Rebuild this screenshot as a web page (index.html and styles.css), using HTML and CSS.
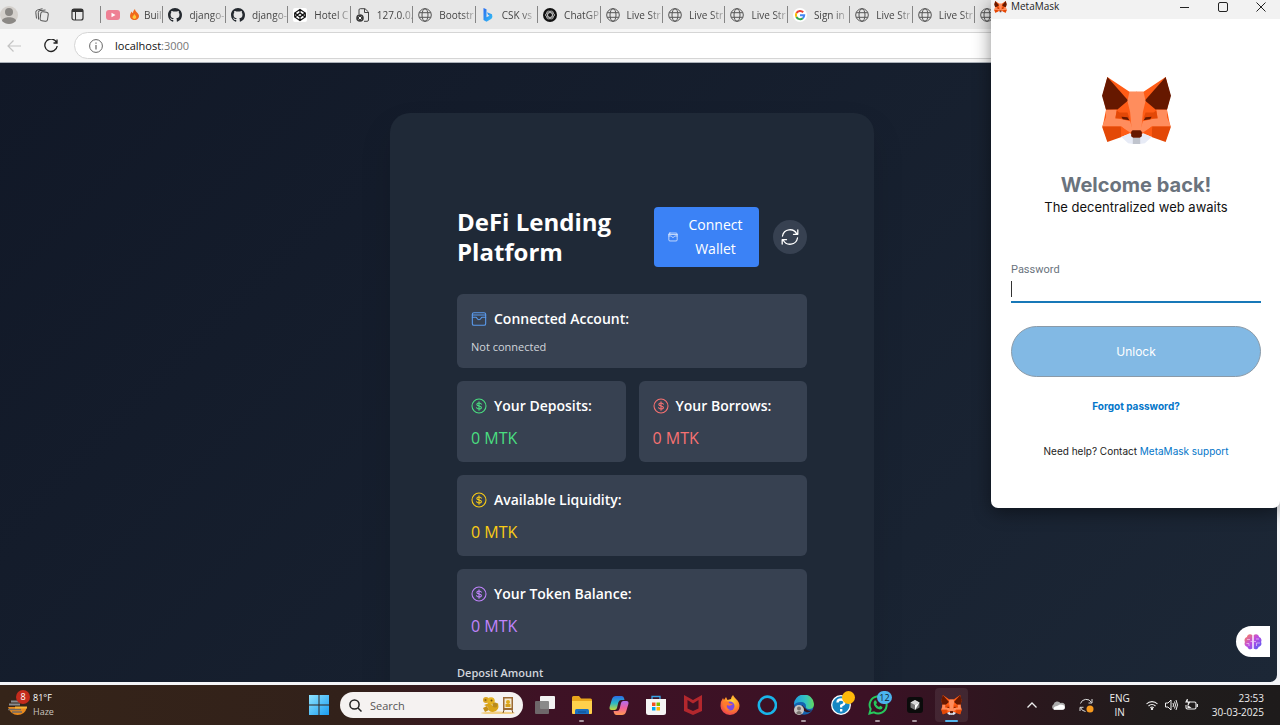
FILE: index.html
```html
<!DOCTYPE html>
<html lang="en">
<head>
<meta charset="utf-8">
<title>DeFi Lending Platform</title>
<link rel="stylesheet" href="styles.css">
</head>
<body>
<svg class="defs" aria-hidden="true">
  <defs>
    <linearGradient id="gWin" x1="0" y1="0" x2="1" y2="1"><stop offset="0" stop-color="#8fe3ff"/><stop offset="1" stop-color="#1a9df0"/></linearGradient>
    <linearGradient id="gBing" x1="0" y1="0" x2="1" y2="1"><stop offset="0" stop-color="#2a6cf0"/><stop offset="1" stop-color="#35c3f5"/></linearGradient>
    <linearGradient id="gBrain" x1="0" y1="0" x2="1" y2="1"><stop offset="0" stop-color="#ff8a4c"/><stop offset=".45" stop-color="#c04be0"/><stop offset="1" stop-color="#4a5cf5"/></linearGradient>
    <linearGradient id="gEdge" x1="0" y1="0" x2="1" y2="0"><stop offset="0" stop-color="#1f9be0"/><stop offset=".6" stop-color="#35c4c0"/><stop offset="1" stop-color="#62d85c"/></linearGradient>
    <radialGradient id="gFox" cx=".6" cy=".3" r=".8"><stop offset="0" stop-color="#ffd83a"/><stop offset=".5" stop-color="#ff8a25"/><stop offset="1" stop-color="#e8305a"/></radialGradient>
    <linearGradient id="gCopA" x1="0" y1="0" x2="0" y2="1"><stop offset="0" stop-color="#2b6de8"/><stop offset=".5" stop-color="#28b8c8"/><stop offset="1" stop-color="#c8d838"/></linearGradient>
    <linearGradient id="gCopB" x1="0" y1="0" x2="0" y2="1"><stop offset="0" stop-color="#b06cf0"/><stop offset=".5" stop-color="#f0609c"/><stop offset="1" stop-color="#ff9a50"/></linearGradient>
    <g id="foxHalf">
      <path fill="#ff5c16" d="M16 0 82 44H104V170H84L58 176 16 190 2 148 12 98 2 56Z"/>
      <path fill="#661800" d="M16 0 0 56 12 98 46 97 78 70Z"/>
      <path fill="#ff8d5d" d="M12 98H44L40 122 84 132 92 160 82 168 58 148H0L12 120Z"/>
      <path fill="#e34807" d="M44 100 52 106H76L82 124 40 124Z"/>
      <path fill="#661800" d="M58 119 76 120 82 129 62 126Z"/>
      <path fill="#e34807" d="M0 148H56L58 179 16 194Z"/>
      <path fill="#ff5c16" d="M56 148 84 166 58 179Z"/>
      <path fill="#e7ebf6" d="M58 179 84 167 94 182V200L78 198Z"/>
    </g>
    <symbol id="metafox" viewBox="0 0 206 200">
      <use href="#foxHalf"/>
      <use href="#foxHalf" transform="translate(206) scale(-1 1)"/>
      <path fill="#ff8d5d" d="M82 44H124L130 72 122 105 117 162H89L84 105 76 72Z"/>
      <path fill="#c0c4cd" d="M92 181H114V200H92Z"/>
      <path fill="#661800" d="M91 159H115L119 164V177L113 181H93L87 177V164Z"/>
    </symbol>
    <symbol id="globe" viewBox="0 0 14 14">
      <g fill="none" stroke="#555" stroke-width="1"><circle cx="7" cy="7" r="6.3"/><ellipse cx="7" cy="7" rx="3" ry="6.3"/><path d="M1.2 4.7H12.8M1.2 9.3H12.8"/></g>
    </symbol>
    <symbol id="github" viewBox="0 0 16 16">
      <path fill="#24292f" d="M8 0C3.58 0 0 3.58 0 8c0 3.54 2.29 6.53 5.47 7.59.4.07.55-.17.55-.38v-1.49c-2.01.37-2.53-.49-2.69-.94-.09-.23-.48-.94-.82-1.13-.28-.15-.68-.52-.01-.53.63-.01 1.08.58 1.23.82.72 1.21 1.87.87 2.33.66.07-.52.28-.87.51-1.07-1.78-.2-3.64-.89-3.64-3.95 0-.87.31-1.59.82-2.15-.08-.2-.36-1.02.08-2.12 0 0 .67-.21 2.2.82a7.6 7.6 0 0 1 4 0c1.53-1.04 2.2-.82 2.2-.82.44 1.1.16 1.92.08 2.12.51.56.82 1.27.82 2.15 0 3.07-1.87 3.75-3.65 3.95.29.25.54.73.54 1.48v2.2c0 .21.15.46.55.38A8 8 0 0 0 16 8c0-4.42-3.58-8-8-8z"/>
    </symbol>
    <symbol id="wallet" viewBox="0 0 24 24">
      <g fill="none" stroke="currentColor" stroke-width="1.6" stroke-linejoin="round" stroke-linecap="round"><rect x="2" y="2.5" width="20" height="19" rx="2.5"/><path d="M2 6H22M2 9.5H7.5C9 9.5 9 13 12 13S15 9.5 16.500 9.500H22"/></g>
    </symbol>
    <symbol id="coin" viewBox="0 0 24 24">
      <g fill="none" stroke="currentColor" stroke-width="1.6" stroke-linecap="round"><circle cx="12" cy="12" r="10.500"/><path d="M12 5.500V18.500M15.500 9.300C15 7.800 13.700 7.500 12 7.500 10 7.500 8.700 8.300 8.700 9.700 8.700 13 15.600 11 15.600 14.300 15.600 15.700 14 16.500 12 16.500 10 16.500 8.700 15.800 8.400 14.500"/></g>
    </symbol>
  </defs>
</svg>

<header class="tabstrip">
  <div class="tab-tools">
    <svg width="18" height="18" viewBox="0 0 18 18"><circle cx="9" cy="9" r="9" fill="#d4d0cc"/><circle cx="9" cy="6" r="4" fill="#8b8885"/><path d="M2 15C2 10 16 10 16 15 12 19 6 19 2 15Z" fill="#8b8885"/></svg>
    <svg width="14" height="14" viewBox="0 0 14 14" fill="none" stroke="#555" stroke-width="1"><rect x="5.500" y="4" width="7.500" height="9" rx="2" transform="rotate(8 9 8)"/><path d="M3.500 11.500 3.300 4.500Q3.300 2.800 5 2.600L10.500 2M1.500 10.500.8 4.500Q.6 2.500 2.500 2L7.500 .700"/></svg>
    <svg width="13" height="13" viewBox="0 0 13 13"><rect x="1" y="1" width="11" height="11" rx="2" fill="none" stroke="#333" stroke-width="1.200"/><path d="M1 1H12V4H1Z" fill="#333"/><path d="M4.500 4V12" stroke="#333"/></svg>
  </div>
  <nav class="tabs">
    <a class="tab" href="#"><svg width="14" height="10" viewBox="0 0 14 10"><rect width="14" height="10" rx="3" fill="#ee8094"/><path d="M5.500 2.800 9.500 5 5.500 7.200Z" fill="#fff"/></svg><svg class="flame" width="9" height="11" viewBox="0 0 9 11"><path d="M5 0C5 3 9 4 9 7.200A4.300 3.800 0 0 1 0 7.200C0 5 1 4 1.500 2.500 2 4 3 4 3 4 3 2 4 1 5 0Z" fill="#f06a1d"/><path d="M4.600 5C5 6.500 6.500 7 6.300 8.600A2 2 0 0 1 2.500 8.600C2.400 7 4 6.500 4.600 5Z" fill="#ffc83a"/></svg><span class="near">Buil</span></a>
    <a class="tab" href="#"><svg width="14" height="14"><use href="#github"/></svg><span>django-</span></a>
    <a class="tab" href="#"><svg width="14" height="14"><use href="#github"/></svg><span>django-</span></a>
    <a class="tab" href="#"><svg width="14" height="14" viewBox="0 0 14 14"><rect width="14" height="14" rx="2" fill="#fff"/><path d="M7 1.500 12.300 5V9L7 12.500 1.700 9V5ZM7 1.500V5L12 9M7 5 2 9M7 12.500V9L2 5M7 9 12 5M4 7 7 5 10 7 7 9Z" fill="none" stroke="#111" stroke-width="1.200"/></svg><span>Hotel C</span></a>
    <a class="tab" href="#"><svg width="14" height="14" viewBox="0 0 14 14"><path d="M3 6V2Q3 .700 4.300.700H9L12.500 4V12Q12.500 13.300 11 13.300H8M8.500 1V4.500H12.500" fill="none" stroke="#444"/><circle cx="4" cy="10" r="3.800" fill="#3a3a3a"/><path d="M2.600 8.600 5.400 11.400M5.400 8.600 2.600 11.400" stroke="#fff"/></svg><span>127.0.0.</span></a>
    <a class="tab" href="#"><svg width="14" height="14"><use href="#globe"/></svg><span>Bootstr</span></a>
    <a class="tab" href="#"><svg width="14" height="14" viewBox="0 0 14 14"><path d="M2.500 0 5.500 1.200V9.200L8.500 7.700 7 6.800 6 4.300 11 6.300Q12 9 10.500 10.800L5.500 13.700 2.500 12Z" fill="url(#gBing)"/></svg><span>CSK vs</span></a>
    <a class="tab" href="#"><svg width="14" height="14" viewBox="0 0 14 14"><circle cx="7" cy="7" r="7" fill="#111"/><g fill="none" stroke="#ddd" stroke-width=".7"><ellipse cx="7" cy="7" rx="4.500" ry="2.300"/><ellipse cx="7" cy="7" rx="4.500" ry="2.300" transform="rotate(60 7 7)"/><ellipse cx="7" cy="7" rx="4.500" ry="2.300" transform="rotate(120 7 7)"/></g></svg><span>ChatGP</span></a>
    <a class="tab" href="#"><svg width="14" height="14"><use href="#globe"/></svg><span>Live Str</span></a>
    <a class="tab" href="#"><svg width="14" height="14"><use href="#globe"/></svg><span>Live Str</span></a>
    <a class="tab" href="#"><svg width="14" height="14"><use href="#globe"/></svg><span>Live Str</span></a>
    <a class="tab" href="#"><svg width="14" height="14" viewBox="0 0 14 14"><circle cx="7" cy="7" r="7" fill="#fff"/><g fill="none" stroke-width="2"><path d="M3.500 5A4.200 4.200 0 0 1 10.200 4.200" stroke="#ea4335"/><path d="M3.400 9A4.200 4.200 0 0 1 3.400 5" stroke="#fbbc05"/><path d="M9.800 10.200A4.200 4.200 0 0 1 3.400 9" stroke="#34a853"/><path d="M7 7.200H11.200A4.200 4.200 0 0 1 9.800 10.200" stroke="#4285f4"/></g></svg><span>Sign in</span></a>
    <a class="tab" href="#"><svg width="14" height="14"><use href="#globe"/></svg><span>Live Str</span></a>
    <a class="tab" href="#"><svg width="14" height="14"><use href="#globe"/></svg><span>Live Str</span></a>
    <a class="tab" href="#" aria-label="Open tab"><svg width="14" height="14"><use href="#globe"/></svg></a>
  </nav>
</header>

<div class="toolbar">
  <button class="nav-btn" aria-label="Back"><svg width="14" height="12" viewBox="0 0 14 12" fill="none" stroke="#c3c3c3" stroke-width="1.200"><path d="M14 6H1M6.500.5 1 6 6.500 11.500"/></svg></button>
  <button class="nav-btn" aria-label="Reload"><svg width="14" height="14" viewBox="0 0 14 14" fill="none" stroke="#222" stroke-width="1.300"><path d="M12.600 3.500A6.200 6.200 0 1 0 13.200 7M13 .500V4H9.500"/></svg></button>
  <div class="address">
    <svg width="14" height="14" viewBox="0 0 14 14"><circle cx="7" cy="7" r="6.400" fill="none" stroke="#666"/><path d="M7 6V10.500M7 3.500V4.800" stroke="#666" stroke-width="1.200"/></svg>
    <span class="url">localhost<span class="port">:3000</span></span>
  </div>
</div>

<div class="viewport">
  <main class="page">
    <section class="card">
      <div class="card-head">
        <h1>DeFi Lending Platform</h1>
        <button class="connect"><svg width="10" height="10"><use href="#wallet"/></svg><span>Connect Wallet</span></button>
        <button class="refresh" aria-label="Refresh"><svg width="20" height="20" viewBox="0 0 20 20" fill="none" stroke="#fff" stroke-width="1.300" stroke-linecap="round" stroke-linejoin="round"><path d="M2.500 9A7.600 7.600 0 0 1 16.800 7M17.500 11A7.600 7.600 0 0 1 3.200 13M17.800 3V7.300H13.500M2.200 17V12.700H6.500"/></svg></button>
      </div>
      <div class="grid">
        <article class="box wide"><h2><svg class="blue" width="16" height="16"><use href="#wallet"/></svg>Connected Account:</h2><p class="note">Not connected</p></article>
        <article class="box green"><h2><svg width="16" height="16"><use href="#coin"/></svg>Your Deposits:</h2><p class="amount">0 MTK</p></article>
        <article class="box red"><h2><svg width="16" height="16"><use href="#coin"/></svg>Your Borrows:</h2><p class="amount">0 MTK</p></article>
        <article class="box wide yellow"><h2><svg width="16" height="16"><use href="#coin"/></svg>Available Liquidity:</h2><p class="amount">0 MTK</p></article>
        <article class="box wide purple"><h2><svg width="16" height="16"><use href="#coin"/></svg>Your Token Balance:</h2><p class="amount">0 MTK</p></article>
      </div>
      <label class="field-label" for="deposit">Deposit Amount</label>
      <input id="deposit" class="field" type="text">
    </section>
  </main>
  <button class="assistant" aria-label="Assistant"><svg width="18" height="16" viewBox="0 0 18 16"><path fill="url(#gBrain)" d="M8.300 1C5-.800 3 1.500 3 3 .500 4 0 6 1 8-.300 10.500 1.500 12.500 3.300 12.800 4 15.500 7 16 8.300 14.500ZM9.700 1C13-.800 15 1.500 15 3 17.500 4 18 6 17 8 18.300 10.500 16.500 12.500 14.700 12.800 14 15.500 11 16 9.700 14.500Z"/><path d="M3 5.500H6M2.500 9.500H5V12M12 5H15M12.500 12V9H16M6.500 7.500H8M10 7.500H12" stroke="#fff" stroke-width=".5" fill="none"/></svg></button>
</div>

<footer class="taskbar">
  <button class="weather">
    <svg width="22" height="25" viewBox="0 0 22 25"><path d="M1 14H20Q18 22 10.500 22 4 22 1 14Z" fill="#e98a1d"/><path d="M4 8.500H14M2 11.500H13" stroke="#8a8c90" stroke-width="1.800"/><path d="M1 16.500H14M5 19H15" stroke="#6f6a66" stroke-width="1.400"/><path d="M8 14.500H20" stroke="#f7b338" stroke-width="2"/></svg>
    <span class="alert">8</span>
    <span class="weather-text"><span class="temp">81°F</span><span>Haze</span></span>
  </button>
  <div class="apps">
    <button class="app" aria-label="Start"><svg width="20" height="20" viewBox="0 0 20 20"><path fill="url(#gWin)" d="M0 0H9.500V9.500H0ZM10.500 0H20V9.500H10.500ZM0 10.500H9.500V20H0ZM10.500 10.500H20V20H10.500Z"/></svg></button>
    <label class="search">
      <svg width="13" height="13" viewBox="0 0 13 13" fill="none" stroke="#222" stroke-width="1.500"><circle cx="5.500" cy="5.500" r="4.600"/><path d="M9 9 12.500 12.500"/></svg>
      <input type="text" placeholder="Search" aria-label="Search">
      <svg width="36" height="18" viewBox="0 0 36 18"><ellipse cx="17" cy="17" rx="17" ry="1.500" fill="#f2cf84"/><circle cx="5" cy="4" r="3" fill="#dba524"/><circle cx="10" cy="5" r="3.800" fill="#e6b422"/><circle cx="4.500" cy="4" r="1" fill="#8a6414"/><circle cx="10.500" cy="4.500" r="1" fill="#6f5210"/><path d="M3 9 8 7 12 10 17 7Q19 15 12 16 7 16 7 11Z" fill="#d9a418"/><path d="M2 12 6 10 8 14 4 16Z" fill="#c48f18"/><circle cx="14" cy="9" r="2.500" fill="#b98b1c"/><path d="M22 1H32V14H22Z" fill="#9b6a34"/><path d="M23.500 2.500H30.500V12H23.500Z" fill="#f4ead2"/><circle cx="27" cy="6" r="2" fill="#e0aa1a"/><path d="M24.500 8H29.500V11H24.500Z" fill="#d5a01c"/><path d="M23 14 22 17M31 14 32 17" stroke="#7a5227"/></svg>
    </label>
    <button class="app" aria-label="Task view"><svg width="20" height="18" viewBox="0 0 20 18"><rect x="5" width="15" height="13" rx="1" fill="#f2f2f2"/><rect y="5" width="14" height="13" rx="1" fill="#777" opacity=".85"/></svg></button>
    <button class="app open" aria-label="Files"><svg width="20" height="18" viewBox="0 0 20 18"><path d="M0 1.500Q0 0 1.500 0H7L9 2.500H18.500Q20 2.500 20 4V16.500Q20 18 18.500 18H1.500Q0 18 0 16.500Z" fill="#e9a51c"/><path d="M0 5H20V16.500Q20 18 18.500 18H1.500Q0 18 0 16.500Z" fill="#ffd04c"/><path d="M3 18V14.500Q3 13 4.500 13H15.500Q17 13 17 14.500V18Z" fill="#1a6fc0"/><path d="M6 16H14" stroke="#0d4c8c"/></svg></button>
    <button class="app" aria-label="Copilot"><svg width="20" height="19" viewBox="0 0 20 19"><path fill="url(#gCopA)" d="M7 0H12.500Q14.500 0 15 2L15.500 4H12Q10 4 9.300 6.500L8 12Q7.500 14 5.500 14H2.500Q0 14 .600 11L3 3Q4 0 7 0Z"/><path fill="url(#gCopB)" d="M13 19H7.500Q5.500 19 5 17L4.500 15H8Q10 15 10.700 12.500L12 7Q12.500 5 14.500 5H17.500Q20 5 19.400 8L17 16Q16 19 13 19Z"/></svg></button>
    <button class="app" aria-label="Store"><svg width="20" height="20" viewBox="0 0 20 20"><path d="M6 5V1.500H14V5" fill="none" stroke="#38a5e8" stroke-width="1.300"/><path d="M0 4H20V17.500Q20 20 17.500 20H2.500Q0 20 0 17.500Z" fill="#f5f5f5"/><path d="M6 7.500H9.500V11H6Z" fill="#f25022"/><path d="M10.500 7.500H14V11H10.500Z" fill="#7fba00"/><path d="M6 12H9.500V15.500H6Z" fill="#00a4ef"/><path d="M10.500 12H14V15.500H10.500Z" fill="#ffb900"/></svg></button>
    <button class="app" aria-label="McAfee"><svg width="18" height="20" viewBox="0 0 18 20"><path fill="#b3272d" d="M0 0 9 5 18 0V16L9 20 0 16ZM3.500 5V13.500L9 16 14.500 13.500V5L9 8.500Z"/></svg></button>
    <button class="app" aria-label="Firefox"><svg width="20" height="20" viewBox="0 0 20 20"><path d="M13 0Q14 2 16 4 19.500 7 19.500 11A9.500 9 0 0 1 .500 11Q.500 6 3 3L4 5 6 2 7.500 5 11 4Q11 2 13 0Z" fill="url(#gFox)"/><circle cx="10" cy="11" r="4.500" fill="#7b4be0"/><path d="M4 7Q8 5 9.500 8.500L13 9Q10 12 7 10Q6 13 10 15 4 16 4 10Z" fill="#ff7a2c"/></svg></button>
    <button class="app" aria-label="Alexa"><svg width="20" height="21" viewBox="0 0 20 21"><path d="M10 18.700A8.500 8.500 0 1 0 7.500 18.200Q10 18.500 10 20" fill="none" stroke="#19b5ea" stroke-width="2.600"/></svg></button>
    <button class="app open" aria-label="Edge"><svg width="20" height="20" viewBox="0 0 20 20"><circle cx="10" cy="10" r="9.800" fill="#1463b0"/><path d="M0 10A10 10 0 0 1 20 9Q20 14 15 14 11.500 14 12 11.500 12 7 7 7 2 7 0 10Z" fill="url(#gEdge)"/><path d="M8 10Q7 15 12 17 16 18 18 15 15 17 12 14Z" fill="#34151f"/><circle cx="5" cy="15" r="5" fill="#c9c5c2"/><circle cx="5" cy="13.500" r="2" fill="#77716d"/><path d="M2 18Q5 14 8 18 5 20.500 2 18Z" fill="#77716d"/></svg></button>
    <button class="app" aria-label="Help, new notice"><svg width="20" height="20" viewBox="0 0 20 20"><circle cx="10" cy="10" r="9.300" fill="#1687c4" stroke="#fff" stroke-width="1.300"/><path d="M6.500 7.500Q6.500 4.500 10 4.500 13.500 4.500 13.500 7.500 13.500 9.500 10.200 10.500V12.500M10.200 14V16.500" fill="none" stroke="#fff" stroke-width="2.300"/></svg><span class="dot"></span></button>
    <button class="app open" aria-label="WhatsApp, 12 messages"><svg width="20" height="20" viewBox="0 0 20 20"><path d="M1.500 18.500 2.700 14A8.500 8.500 0 1 1 6 17.300Z" fill="none" stroke="#27c75c" stroke-width="2"/><path d="M6.500 5.500 8 5.500 9 8 8 9.200Q9 11 11 12L12.200 10.800 14.500 12Q14.500 14.500 12 14.500 8 14 6 10 5 7 6.500 5.500Z" fill="#27c75c"/></svg><span class="count">12</span></button>
    <button class="app open" aria-label="Cursor"><svg width="16" height="16" viewBox="0 0 16 16"><rect width="16" height="16" rx="3" fill="#0b0b0b"/><path d="M8 3 12.500 5.500V10.500L8 13 3.500 10.500V5.500Z" fill="#777"/><path d="M3.500 5.500 8 3 12.500 5.500 8 8Z" fill="#d8d8d8"/><path d="M12.500 5.500 8 13V8Z" fill="#fff"/></svg></button>
    <button class="app open active" aria-label="MetaMask"><svg width="21" height="20"><use href="#metafox"/></svg></button>
  </div>
  <div class="tray">
    <svg width="10" height="6" viewBox="0 0 10 6" fill="none" stroke="#eee" stroke-width="1.300"><path d="M.500 5.500 5 1 9.500 5.500"/></svg>
    <svg width="14" height="9" viewBox="0 0 14 9"><path d="M3 8.800A3 3 0 0 1 2.500 3.500 4 4 0 0 1 9.500 2 3.500 3.500 0 0 1 12 8.800Z" fill="#aaa"/><path d="M3 8.800Q1.500 6 6 5L9 3.500Q13.800 3.500 13.800 6.500 13.500 9 11 8.800Z" fill="#fff"/></svg>
    <svg width="15" height="15" viewBox="0 0 15 15"><path d="M1.500 5.500A6 6 0 0 1 12.500 4.500M13 1V5H9.500M1.500 9.500A6 6 0 0 0 6.500 13.500M1 13V9.300H4.500" fill="none" stroke="#ddd"/><circle cx="11" cy="11" r="3.500" fill="#f79a1e"/></svg>
    <span class="lang">ENG<br>IN</span>
    <svg width="12" height="10" viewBox="0 0 12 10" fill="none" stroke="#eee" stroke-width="1.100"><path d="M.500 4A7.500 7.500 0 0 1 11.500 4M2.500 6A5 5 0 0 1 9.500 6M4.300 7.800A2.500 2.500 0 0 1 7.700 7.800"/><circle cx="6" cy="9" r=".600" fill="#eee"/></svg>
    <svg width="13" height="12" viewBox="0 0 13 12" fill="none" stroke="#eee"><path d="M.500 4H3L6 1V11L3 8H.500ZM8 4Q9 6 8 8M9.500 2.500Q11.500 6 9.500 9.500M11 1Q14 6 11 11"/></svg>
    <svg width="13" height="12" viewBox="0 0 13 12" fill="none" stroke="#eee" stroke-width="1.100"><path d="M4.500 3H9.500Q11 3 11 4.500V8.500Q11 10 9.500 10H2.500Q1 10 1 8.500V6M12.400 5V8"/><path d="M2.500 0 1 3H4.500L3 6" fill="#eee"/><path d="M3 7 5 8.500H3Z" fill="#eee"/></svg>
    <span class="clock">23:53<br>30-03-2025</span>
  </div>
</footer>

<aside class="popup">
  <div class="popup-bar">
    <svg width="13" height="12"><use href="#metafox"/></svg>
    <span class="popup-title">MetaMask</span>
    <button aria-label="Minimize"><svg width="10" height="10" viewBox="0 0 10 10"><path d="M0 5.500H9" stroke="#222"/></svg></button>
    <button aria-label="Maximize"><svg width="10" height="10" viewBox="0 0 10 10"><rect x=".5" y=".5" width="9" height="9" rx="1.500" fill="none" stroke="#222"/></svg></button>
    <button aria-label="Close"><svg width="10" height="10" viewBox="0 0 10 10"><path d="M.500.500 9.500 9.500M9.500.500.500 9.500" stroke="#222"/></svg></button>
  </div>
  <form class="popup-body">
    <svg class="fox" width="69" height="67"><use href="#metafox"/></svg>
    <h2>Welcome back!</h2>
    <p class="tagline">The decentralized web awaits</p>
    <label for="password">Password</label>
    <input id="password" type="password">
    <button class="unlock" type="button">Unlock</button>
    <a class="forgot" href="#">Forgot password?</a>
    <p class="help">Need help? Contact <a href="#">MetaMask support</a></p>
  </form>
</aside>
</body>
</html>
```
FILE: styles.css
```css
* { box-sizing: border-box; }

body {
  margin: 0;
  height: 100vh;
  display: flex;
  flex-direction: column;
  overflow: hidden;
  background: #f4f5f8;
  font-family: "Open Sans", "Noto Sans", sans-serif;
}

h1, h2, p { margin: 0; }
svg { flex: none; display: block; }
a { text-decoration: none; }
button { border: 0; padding: 0; background: none; font: inherit; color: inherit; }
input { font: inherit; }
.defs { position: absolute; width: 0; height: 0; }

/* Browser chrome */
.tabstrip { display: flex; flex: none; height: 29px; background: #e7e7e7; }
.tab-tools { flex: none; width: 100px; display: flex; align-items: center; gap: 17px; }
.tab-tools svg + svg + svg { margin-left: 5px; }
.tabs { flex: 1; display: grid; grid-template-columns: repeat(18, 1fr); padding-right: 56px; align-items: center; }
.tab {
  height: 17px;
  min-width: 0;
  display: flex;
  align-items: center;
  padding-left: 5px;
  border-left: 1px solid #858585;
  color: #444;
  font-size: 10px;
  white-space: nowrap;
}
.tab span {
  flex: none;
  margin-left: 7px;
  mask-image: linear-gradient(90deg, #000 65%, rgba(0, 0, 0, .3));
}
.tab .flame { margin-left: 10px; }
.tab .near { margin-left: 5px; }

.toolbar { flex: none; height: 34px; display: flex; align-items: center; background: #f7f7f7; border-bottom: 1px solid #aab0b8; }
.nav-btn { width: 37px; display: flex; justify-content: flex-end; }
.nav-btn:first-child { width: 21px; }
.address {
  flex: 1;
  height: 27px;
  margin-left: 16px;
  padding-left: 14px;
  display: flex;
  align-items: center;
  gap: 12px;
  background: #fff;
  border: 1px solid #d5d5d5;
  border-radius: 14px 0 0 14px;
}
.url { font-size: 11px; color: #111; }
.port { color: #777; }

/* Web page */
.viewport {
  flex: 1;
  min-height: 0;
  margin: 0 3px 3px 0;
  position: relative;
  overflow: hidden;
  border-radius: 0 0 7px 0;
  background: linear-gradient(135deg, #111827, #1c2736);
}
.page { padding: 50px 13px 0 0; display: flex; justify-content: center; }
.card {
  width: 484px;
  padding: 94px 67px;
  background: #1f2937;
  border-radius: 20px;
  box-shadow: 0 16px 32px rgba(0, 0, 0, .12);
  color: #fff;
}
.card-head { display: flex; align-items: center; margin-bottom: 27px; }
.card-head h1 { flex: 1; font-size: 24px; line-height: 30px; font-weight: 700; }
.connect {
  width: 105px;
  height: 60px;
  padding: 0 14px;
  display: flex;
  align-items: center;
  gap: 8px;
  background: #3b82f6;
  border-radius: 4px;
  font-size: 14px;
  line-height: 24px;
}
.connect span { flex: 1; }
.refresh {
  width: 34px;
  height: 34px;
  margin-left: 14px;
  display: flex;
  align-items: center;
  justify-content: center;
  background: #374151;
  border-radius: 50%;
}
.grid { display: grid; grid-template-columns: 1fr 1fr; gap: 13px; }
.wide { grid-column: 1 / -1; }
.box { padding: 13px 14px 12px; background: #374151; border-radius: 6px; }
.box h2 { display: flex; align-items: center; gap: 7px; font-size: 14px; line-height: 24px; font-weight: 600; }
.note { margin-top: 6px; font-size: 11px; line-height: 19px; color: #d1d5db; }
.amount { margin-top: 8px; font-size: 16px; line-height: 24px; }
.blue { color: #5b9cf0; }
.green .amount, .green h2 svg { color: #4ade80; }
.red .amount, .red h2 svg { color: #f87171; }
.yellow .amount, .yellow h2 svg { color: #facc15; }
.purple .amount, .purple h2 svg { color: #c084fc; }
.field-label { display: block; margin: 14px 0 8px; font-size: 11px; line-height: 17px; font-weight: 600; color: #d1d5db; }
.field { width: 100%; height: 40px; background: #374151; border: 1px solid #4b5563; border-radius: 6px; }
.assistant {
  position: absolute;
  right: 7px;
  bottom: 25px;
  width: 34px;
  height: 31px;
  padding-left: 8px;
  display: flex;
  align-items: center;
  background: #fff;
  border-radius: 16px 0 0 16px;
}

/* Taskbar */
.taskbar {
  flex: none;
  height: 40px;
  padding: 0 16px 0 4px;
  display: grid;
  grid-template-columns: 1fr auto 1fr;
  align-items: center;
  background: linear-gradient(90deg, #352419 0, #32211a 27%, #3e1225 42%, #3b1125 68%, #2b171d 80%, #201c1c 90%, #1e1b1b);
  color: #eee;
}
.weather { position: relative; justify-self: start; display: flex; align-items: center; gap: 4px; padding-left: 3px; font-size: 9px; line-height: 14px; text-align: left; color: #c9c3bf; }
.weather-text { display: flex; flex-direction: column; }
.temp { color: #fff; }
.alert {
  position: absolute;
  left: 12px;
  top: -1px;
  width: 14px;
  height: 14px;
  border-radius: 50%;
  background: #c42b1c;
  color: #fff;
  text-align: center;
}
.apps { display: flex; align-items: center; }
.app { position: relative; width: 37px; height: 34px; display: flex; align-items: center; justify-content: center; }
.open::after { content: ""; position: absolute; left: 16px; bottom: 0; width: 5px; height: 2px; border-radius: 1px; background: #a9969f; }
.active { width: 33px; margin-left: 2px; background: rgba(255, 255, 255, .08); border-radius: 4px; }
.active::after { left: 10px; width: 13px; background: #55b5ec; }
.search {
  width: 183px;
  height: 26px;
  margin: 0 3px;
  padding: 0 6px 0 9px;
  display: flex;
  align-items: center;
  background: #f5f2f1;
  border-radius: 13px;
}
.search input { flex: 1; min-width: 0; padding: 0 0 0 8px; border: 0; outline: 0; background: none; font-size: 11px; color: #444; }
.search input::placeholder { color: #555; }
.dot, .count { position: absolute; top: 3px; right: 4px; height: 13px; border-radius: 7px; }
.dot { width: 13px; background: #ffb90a; }
.count { width: 15px; background: #4cb4ee; color: #10212e; font-size: 9px; line-height: 13px; text-align: center; }
.tray { justify-self: end; display: flex; align-items: center; gap: 7px; font-size: 10px; line-height: 14px; }
.tray svg:nth-child(-n+2) { margin-right: 7px; }
.lang { margin: 0 9px 0 8px; text-align: center; }
.clock { margin-left: 7px; text-align: right; }

/* Wallet window */
.popup {
  position: absolute;
  top: 0;
  right: 0;
  width: 289px;
  background: #fff;
  border-radius: 0 0 7px 7px;
  overflow: hidden;
  box-shadow: 0 4px 18px rgba(0, 0, 0, .45);
  font-family: Inter, "Open Sans", sans-serif;
}
.popup-bar { height: 19px; padding: 0 14px 6px 3px; display: flex; align-items: center; gap: 28px; background: #f2f2f2; font: 10px/13px "Open Sans", sans-serif; color: #222; }
.popup-title { flex: 1; margin-left: -24px; }
.popup-body { padding: 58px 19px 50px 20px; display: flex; flex-direction: column; align-items: center; }
.popup-body h2 { margin-top: 29px; font-size: 20px; line-height: 25px; font-weight: 700; color: #6a737d; }
.tagline { font-size: 13px; line-height: 18px; color: #111; }
.popup-body label { align-self: flex-start; margin-top: 47px; font: 11px/13px Roboto, sans-serif; color: #6a737d; }
#password {
  width: 100%;
  height: 27px;
  padding: 0;
  border: 0;
  border-bottom: 2px solid #1878b8;
  outline: 0;
  background: linear-gradient(#333, #333) 0 5px / 1px 16px no-repeat;
  font-size: 16px;
}
.unlock { width: 100%; height: 51px; margin-top: 23px; border: 1px solid #8a9aa8; border-radius: 26px; background: #82b9e4; color: #fff; font-size: 12px; }
.forgot { margin-top: 22px; font-size: 10px; line-height: 14px; font-weight: 700; color: #0376c9; }
.help { margin-top: 31px; font-size: 10px; line-height: 14px; color: #222; }
.help a { color: #0376c9; }
```
